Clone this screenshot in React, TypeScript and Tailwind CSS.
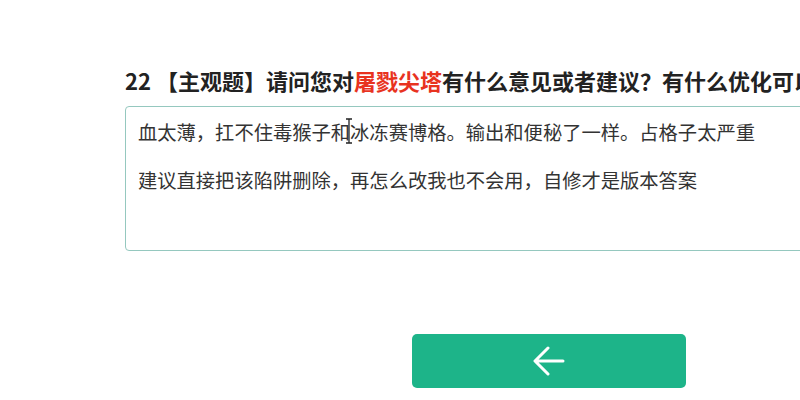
const cjk = { fontFamily: '"Noto Sans CJK SC", "Noto Sans", sans-serif' };

export default function App() {
  return (
    <div className="w-[800px] h-[400px] overflow-hidden bg-white" style={cjk}>
      <div className="pl-[125px] pt-[66px] w-[900px]">
        <h2 className="text-[22px] leading-[28px] font-bold text-[#222] whitespace-nowrap">
          22 【主观题】请问您对<span className="text-[#e8331f]">屠戮尖塔</span>
          有什么意见或者建议？有什么优化可以
        </h2>
        <div className="relative mt-[12px] w-[720px] h-[145px] border border-[#95c8bf] rounded-[4px] pl-[12px] pt-[12px] text-[19.3px] leading-[26px] text-[#333]">
          <p>血太薄，扛不住毒猴子和冰冻赛博格。输出和便秘了一样。占格子太严重</p>
          <p className="mt-[22px]">建议直接把该陷阱删除，再怎么改我也不会用，自修才是版本答案</p>
          <svg
            className="absolute left-[219px] top-[11px]"
            width="8"
            height="26"
            viewBox="0 0 8 26"
          >
            <path d="M1 1h6M4 1v24M1 25h6" stroke="#222" strokeWidth="1.3" fill="none" />
          </svg>
        </div>
        <button
          type="button"
          className="ml-[287px] mt-[83px] w-[274px] h-[54px] rounded-[5px] bg-[#1db489] flex items-center justify-center"
        >
          <svg width="34" height="30" viewBox="0 0 34 30" fill="none">
            <path
              d="M31 15H4M16 2L3 15l13 13"
              stroke="#fff"
              strokeWidth="3"
              strokeLinecap="round"
              strokeLinejoin="round"
            />
          </svg>
        </button>
      </div>
    </div>
  );
}
